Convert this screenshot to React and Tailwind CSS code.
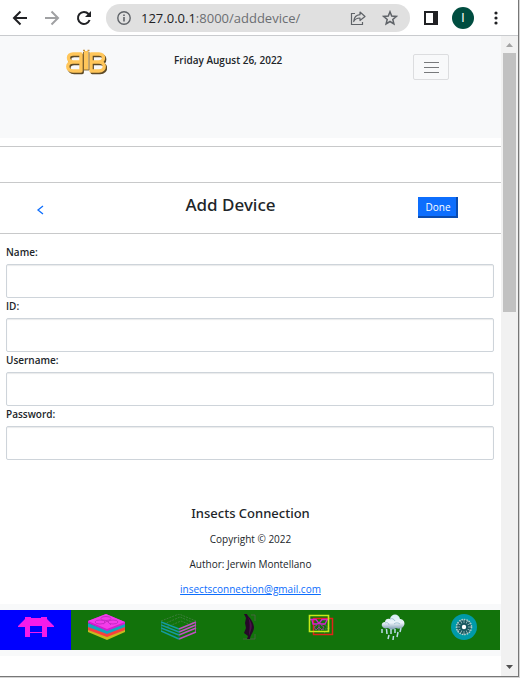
import React from "react";

const FIELDS = [
  { id: "name", label: "Name:", type: "text" },
  { id: "device-id", label: "ID:", type: "text" },
  { id: "username", label: "Username:", type: "text" },
  { id: "password", label: "Password:", type: "password" },
];

function BrowserBar() {
  return (
    <header className="flex h-9 shrink-0 items-center border-b border-[#c9cbce] bg-white pl-3 pr-3.5 text-[#202124]">
      <button aria-label="Back" className="w-4">
        <svg viewBox="0 0 16 16" className="h-4 w-4" fill="none" stroke="#202124" strokeWidth="2">
          <path d="M15 8H2M8.500 1.500L2 8l6.500 6.500" />
        </svg>
      </button>
      <button aria-label="Forward" className="ml-4 w-4">
        <svg viewBox="0 0 16 16" className="h-4 w-4" fill="none" stroke="#a0a1a3" strokeWidth="2">
          <path d="M1 8h13M7.500 1.500L14 8l-6.500 6.500" />
        </svg>
      </button>
      <button aria-label="Reload" className="ml-4 w-4">
        <svg viewBox="0 0 16 16" className="h-4 w-4" fill="none" stroke="#202124" strokeWidth="2">
          <path d="M13.600 10A6 6 0 1 1 12.500 4L14 5.500" />
          <path d="M15 1v6H9z" fill="#202124" stroke="none" />
        </svg>
      </button>
      <div className="ml-3.5 flex h-7 min-w-0 flex-1 items-center rounded-full bg-[#e0e0e0] px-3">
        <svg viewBox="0 0 14 14" className="-ml-px mr-2.5 h-[14px] w-[14px] shrink-0" fill="none" stroke="#5f6368" strokeWidth="1.400">
          <circle cx="7" cy="7" r="6.200" />
          <path d="M7 6v4.500M7 3.400v1.500" strokeWidth="1.600" />
        </svg>
        <input
          aria-label="Address"
          className="sr-only"
          readOnly
          tabIndex={-1}
          value="127.0.0.1:8000/adddevice/"
        />
        <span className="flex-1 whitespace-nowrap font-['Open_Sans','Noto_Sans',sans-serif] text-[13px] leading-5 text-[#6b6e72]">
          <span className="text-[#202124]">127.0.0.1</span>:8000/adddevice/
        </span>
        <button aria-label="Share" className="mr-4">
          <svg viewBox="0 0 16 16" className="h-4 w-4" fill="none" stroke="#5f6368" strokeWidth="1.200">
            <path d="M5 3.500H1.500v11h11V12" />
            <path d="M10 2l5 4.500-5 4V8C7 8 5 9 3.700 11.500 4 8 6 5 10 4.700z" strokeLinejoin="round" />
          </svg>
        </button>
        <button aria-label="Bookmark">
          <svg viewBox="0 0 16 16" className="h-4 w-4" fill="none" stroke="#5f6368" strokeWidth="1.500">
            <path d="M8 1.800l1.700 4.300 4.600.3-3.500 3 1.100 4.500L8 11.500l-3.900 2.400 1.100-4.500-3.500-3 4.600-.3z" />
          </svg>
        </button>
      </div>
      <button aria-label="Side panel" className="ml-3.5">
        <svg viewBox="0 0 14 14" className="h-[14px] w-[14px]">
          <path d="M0 0h14v14H0zM2 2v10h7V2z" fill="#202124" fillRule="evenodd" />
        </svg>
      </button>
      <button className="ml-3.5 h-[22px] w-[22px] rounded-full bg-[#004d40] font-['Liberation_Sans',sans-serif] text-xs text-white">
        I
      </button>
      <button aria-label="Menu" className="ml-3.5 w-4">
        <svg viewBox="0 0 16 16" className="h-4 w-4" fill="#202124">
          <circle cx="8" cy="3" r="1.600" />
          <circle cx="8" cy="8" r="1.600" />
          <circle cx="8" cy="13" r="1.600" />
        </svg>
      </button>
    </header>
  );
}

function Logo() {
  const wing = "M4 6h8c6 0 6 7 0 8 7 0 7 9 0 9H4zM4 14h8";
  return (
    <svg viewBox="0 0 42 30" className="h-[30px] w-[42px]" fill="none" strokeLinejoin="round">
      <g transform="translate(1.200 1.500)" stroke="#5d4a26" strokeWidth="3.400">
        <path d={wing} transform="translate(22 0)" />
        <path d={wing} transform="translate(20 0) scale(-1 1)" />
      </g>
      <g stroke="#ffc65a" strokeWidth="3.400">
        <path d={wing} transform="translate(22 0)" />
        <path d={wing} transform="translate(20 0) scale(-1 1)" />
      </g>
      <path d="M19 3h4.500v19H19z" fill="#ffc65a" />
      <path d="M18.500 4v18M24 4v18M18.500 22h5.500" stroke="#80622d" strokeWidth=".9" />
      <path d="M18 2.500h2M22.500 2.500h2" stroke="#c4933f" strokeWidth="1.500" />
    </svg>
  );
}

function HomeIcon() {
  return (
    <svg viewBox="0 0 36 26" className="h-[26px] w-9" fill="#f51bea">
      <path d="M7 3h6v1h10V3h6v2l7 7v1h-7v10h-5v-4H12v4H7V13H0v-1l7-7zM12 12v6h12v-6z" fillRule="evenodd" />
    </svg>
  );
}

function LayersIcon() {
  return (
    <svg viewBox="0 0 38 26" className="h-[26px] w-[38px]">
      <path d="M0 14v4l19 8 18-8v-4l-18 8z" fill="#c7ba20" />
      <path d="M0 12v4l19 7 18-7v-4l-18 7z" fill="#fa3f3d" />
      <path d="M0 9v4l19 7 18-7V9l-18 7z" fill="#13a6bd" />
      <path d="M0 7l18-7 19 8v2l-18 7L0 9z" fill="#d51bd0" />
      <path d="M0 7l18-7 19 8-18 7z" fill="#f33de9" />
      <g fill="none" stroke="#c52bc5" strokeWidth="1">
        <ellipse cx="18" cy="4.500" rx="5" ry="2" />
        <ellipse cx="12" cy="8" rx="5" ry="2" />
        <ellipse cx="25" cy="8" rx="5" ry="2" />
        <path d="M15 10l4-3 4 4" />
      </g>
    </svg>
  );
}

function WireLayersIcon() {
  return (
    <svg viewBox="0 0 36 26" className="h-[26px] w-9" fill="none" strokeWidth="1.500">
      <g stroke="#477f46" strokeWidth=".8" strokeDasharray="2 1">
        <path d="M0 7l18-7 17 7M3 10l16-7 14 6M6 13l14-6 10 4" />
      </g>
      <path d="M0 8l18 7M0 11l18 7M0 14l18 7M0 17l18 8" stroke="#159aa0" />
      <path d="M18 15l17-7M18 18l17-7M18 21l17-7M18 25l17-7" stroke="#c04fc2" />
      <path d="M.5 8v9M18 15v10" stroke="#168e8f" strokeWidth=".6" />
      <path d="M34.500 8v10" stroke="#b352b5" strokeWidth=".8" />
    </svg>
  );
}

function WingIcon() {
  return (
    <svg viewBox="0 0 14 26" className="h-[26px] w-3.5">
      <path d="M8 1h4v6M12 20v5H0" fill="none" stroke="#55604f" strokeWidth=".8" />
      <path d="M1 0h3c0 2 6 5 7 13 0 5-4 8-4 12H4l1-3-4-3 2-5-1-5 1-5z" fill="#250928" />
      <path d="M5 3c3 5 5 8 3 13l-2 6c0-6 2-11-1-19z" fill="#4b104c" />
    </svg>
  );
}

function MothIcon() {
  return (
    <svg viewBox="0 0 26 22" className="h-[22px] w-[26px]" fill="none">
      <path d="M5.500 4.500h19v16h-19z" stroke="#e0241a" strokeWidth="1.500" />
      <path d="M15 10l4 2v6M13 16l9-2M16 19l5-3" stroke="#4d8850" strokeDasharray="1 1" />
      <g stroke="#d31fd3" strokeWidth="1.300">
        <path d="M2 5.500h6l3 4 3-4h6" />
        <path d="M4 6l1 4h4l2-1 2 1h4l2-4" />
      </g>
      <path d="M9 11l-3 2 2 3 3-3 3 3 2-3-3-2M11 10v7" stroke="#a238a2" strokeWidth=".9" />
      <path d="M1.500 1.500h19v16h-19z" stroke="#c7ea1b" strokeWidth="1.600" />
    </svg>
  );
}

function RainIcon() {
  return (
    <svg viewBox="0 0 24 26" className="h-[26px] w-6">
      <defs>
        <linearGradient id="cloud-shade" x1="0" y1="0" x2="0" y2="1">
          <stop offset="0" stopColor="#d5edf4" />
          <stop offset=".55" stopColor="#edf4fa" />
          <stop offset="1" stopColor="#7b9ab0" />
        </linearGradient>
      </defs>
      <path d="M1 12c-1-2 1-4 3-4 0-3 3-4 5-3 1-6 9-6 10 0 4 0 6 5 3 8-2 2-5 2-7 1-3 2-5 2-8 0-3 1-5 0-6-2z" fill="url(#cloud-shade)" />
      <path d="M4 9c2-1 4 0 4 2M9 5c2-1 4 0 5 2M13 10c2-2 5-1 6 0" fill="none" stroke="#9fc1d1" />
      <g stroke="#badbe9" strokeWidth="1.500">
        <path d="M1 15v4M5.500 15l.5 5M10 15v5M14 15v4M20 14l-1 4M17 18l-1 5M8 21l-1 4M12.500 22l-.5 4" />
      </g>
    </svg>
  );
}

const SPOKES = [0, 30, 60, 90, 120, 150];

function WheelIcon() {
  return (
    <svg viewBox="0 0 26 26" className="h-[26px] w-[26px]">
      <circle cx="13" cy="13" r="13" fill="#009aa8" />
      <circle cx="13" cy="13" r="7.500" fill="#17565f" stroke="#b8d5d2" strokeWidth="1.500" strokeDasharray="1.500 1" />
      <g stroke="#9fc0bf" strokeWidth=".8">
        {SPOKES.map((angle) => (
          <path key={angle} d="M13 5v16" transform={`rotate(${angle} 13 13)`} />
        ))}
      </g>
      <circle cx="13" cy="13" r="4" fill="#17565f" />
      <circle cx="13" cy="13" r="2.200" fill="#fff" />
    </svg>
  );
}

const NAV = [
  { label: "Home", Icon: HomeIcon, active: true },
  { label: "Layers", Icon: LayersIcon },
  { label: "Structure", Icon: WireLayersIcon },
  { label: "Wing", Icon: WingIcon },
  { label: "Insects", Icon: MothIcon },
  { label: "Weather", Icon: RainIcon },
  { label: "Settings", Icon: WheelIcon },
];

function Page() {
  return (
    <main className="min-w-0 flex-1 bg-white font-['Open_Sans','Noto_Sans',sans-serif] text-[10px] leading-5 text-[#212529]">
      <div className="flex h-[102px] items-start bg-[#f8f9fa]">
        <div className="flex w-1/3 shrink-0 justify-center pl-1">
          <a href="#home" aria-label="Home" className="mt-3">
            <Logo />
          </a>
        </div>
        <p className="mt-3.5 ml-[7px] flex-1 font-semibold whitespace-nowrap">Friday August 26, 2022</p>
        <button
          aria-label="Toggle navigation"
          className="mt-4.5 mr-[52px] flex h-[26px] w-9 flex-col items-center justify-center gap-1 rounded-xs border border-[#dcdddf]"
        >
          <span className="h-px w-[15px] bg-[#77797b]" />
          <span className="h-px w-[15px] bg-[#77797b]" />
          <span className="h-px w-[15px] bg-[#77797b]" />
        </button>
      </div>
      <hr className="mt-2 border-[#c8c9ca]" />
      <hr className="mt-[35px] border-[#c8c9ca]" />
      <div className="grid h-[50px] grid-cols-[1fr_auto_1fr] items-start">
        <a href="#back" aria-label="Back" className="mt-[22px] ml-9 w-fit">
          <svg viewBox="0 0 8 10" className="h-2.5 w-2" fill="none" stroke="#0d6efd" strokeWidth="1.300">
            <path d="M7 1L2 5l5 4" />
          </svg>
        </a>
        <h1 className="mt-2 -ml-10 font-['Noto_Sans',sans-serif] text-[17px] leading-7 font-medium">Add Device</h1>
        <button
          form="device-form"
          className="mt-3.5 mr-[43px] h-[21px] w-10 justify-self-end border-r-2 border-b-2 border-[#0a4bae] bg-[#0d6efd] pl-0.5 text-[10px] leading-4 text-white"
        >
          Done
        </button>
      </div>
      <hr className="border-[#c8c9ca]" />
      <form id="device-form" className="mt-2.5 px-1.5 pr-[7px]" onSubmit={(e) => e.preventDefault()}>
        {FIELDS.map((f) => (
          <div key={f.id}>
            <label htmlFor={f.id} className="block leading-4 font-semibold">{f.label}</label>
            <input
              id={f.id}
              type={f.type}
              className="mt-1 block h-[34px] w-full rounded-xs border border-[#ced4da] bg-white px-2 shadow-[inset_0_1px_1px_#e9eaec]"
            />
          </div>
        ))}
      </form>
      <footer className="pt-[41px] text-center">
        <h2 className="font-['Noto_Sans',sans-serif] text-[13px] leading-6 font-medium">Insects Connection</h2>
        <p className="mt-1">Copyright © 2022</p>
        <p className="mt-[5px]">Author: Jerwin Montellano</p>
        <p className="mt-[5px]">
          <a href="mailto:insectsconnection@gmail.com" className="text-[#0d6efd] underline">insectsconnection@gmail.com</a>
        </p>
      </footer>
      <div className="mt-[5px] bg-[#f8f9fa] py-1.5 pr-px">
        <nav className="grid h-10 grid-cols-7 bg-[#12730b]">
          {NAV.map(({ label, Icon, active }) => (
            <a
              key={label}
              href={`#${label.toLowerCase()}`}
              aria-label={label}
              className={active ? "flex justify-center bg-[#0000ff] pt-1" : "flex justify-center pt-1"}
            >
              <Icon />
            </a>
          ))}
        </nav>
      </div>
    </main>
  );
}

function Scrollbar() {
  return (
    <div aria-hidden="true" className="flex w-[17px] shrink-0 flex-col items-center bg-[#f1f1f1]">
      <svg viewBox="0 0 17 17" className="h-[17px] w-[17px]">
        <path d="M5 11l3.500-4 3.500 4z" fill="#a3a3a3" />
      </svg>
      <div className="h-[259px] w-[13px] bg-[#c1c1c1]" />
      <svg viewBox="0 0 17 17" className="mt-auto h-[17px] w-[17px]">
        <path d="M5 6h7l-3.500 4z" fill="#505050" />
      </svg>
    </div>
  );
}

export default function App() {
  return (
    <div className="flex min-h-screen bg-[#d4d4d4] pr-px pb-px">
      <div className="flex min-w-0 flex-1 flex-col border-r border-b border-[#777777] bg-white">
        <BrowserBar />
        <div className="flex flex-1">
          <Page />
          <Scrollbar />
        </div>
      </div>
    </div>
  );
}
